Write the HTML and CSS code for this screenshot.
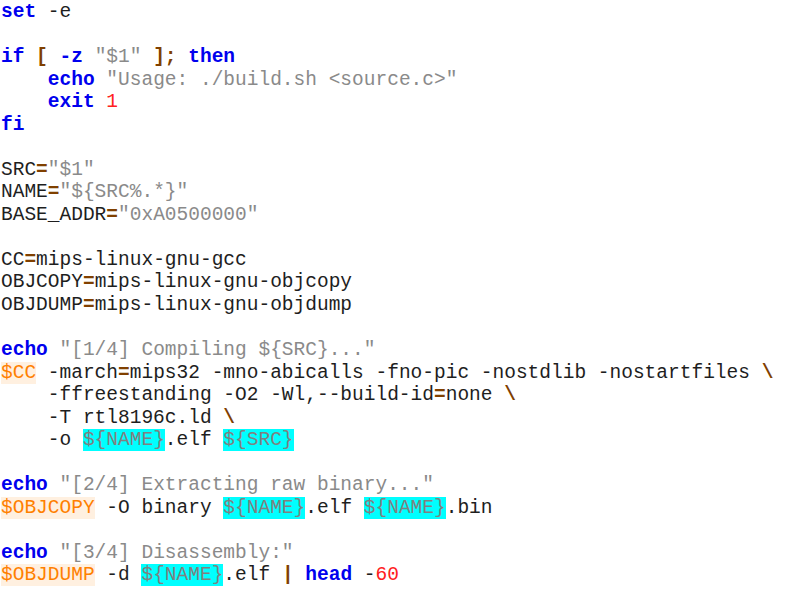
FILE: index.html
```html
<!DOCTYPE html>
<html>
<head>
<meta charset="utf-8">
<link rel="stylesheet" href="styles.css">
</head>
<body>
<pre class="code"><span class="kw">set</span> -e

<span class="kw">if</span> <span class="op">[</span> <span class="kw">-z</span> <span class="str">"$1"</span> <span class="op">];</span> <span class="kw">then</span>
    <span class="kw">echo</span> <span class="str">"Usage: ./build.sh &lt;source.c&gt;"</span>
    <span class="kw">exit</span> <span class="num">1</span>
<span class="kw">fi</span>

SRC<span class="op">=</span><span class="str">"$1"</span>
NAME<span class="op">=</span><span class="str">"${SRC%.*}"</span>
BASE_ADDR<span class="op">=</span><span class="str">"0xA0500000"</span>

CC<span class="op">=</span>mips-linux-gnu-gcc
OBJCOPY<span class="op">=</span>mips-linux-gnu-objcopy
OBJDUMP<span class="op">=</span>mips-linux-gnu-objdump

<span class="kw">echo</span> <span class="str">"[1/4] Compiling ${SRC}..."</span>
<span class="var">$CC</span> -march<span class="op">=</span>mips32 -mno-abicalls -fno-pic -nostdlib -nostartfiles <span class="op">\</span>
    -ffreestanding -O2 -Wl,--build-id<span class="op">=</span>none <span class="op">\</span>
    -T rtl8196c.ld <span class="op">\</span>
    -o <span class="ref">${NAME}</span>.elf <span class="ref">${SRC}</span>

<span class="kw">echo</span> <span class="str">"[2/4] Extracting raw binary..."</span>
<span class="var">$OBJCOPY</span> -O binary <span class="ref">${NAME}</span>.elf <span class="ref">${NAME}</span>.bin

<span class="kw">echo</span> <span class="str">"[3/4] Disassembly:"</span>
<span class="var">$OBJDUMP</span> -d <span class="ref">${NAME}</span>.elf <span class="op">|</span> <span class="kw">head</span> -<span class="num">60</span>
</pre>
</body>
</html>
```

FILE: styles.css
```css
html, body {
  margin: 0;
  padding: 0;
  background: #ffffff;
}

.code {
  margin: 0;
  padding: 1px 0 0 1px;
  font-family: "Liberation Mono", "Courier New", monospace;
  font-size: 19.5px;
  line-height: 22.53px;
  color: #1e1e1e;
  white-space: pre;
}

.kw {
  color: #0000ee;
  font-weight: bold;
}

.str {
  color: #8a8a8a;
}

.num {
  color: #ff2020;
}

.op {
  color: #804000;
  font-weight: bold;
}

.var {
  color: #ff8000;
  background: #fff0e0;
}

.ref {
  color: #808080;
  background: #00ffff;
}
```
